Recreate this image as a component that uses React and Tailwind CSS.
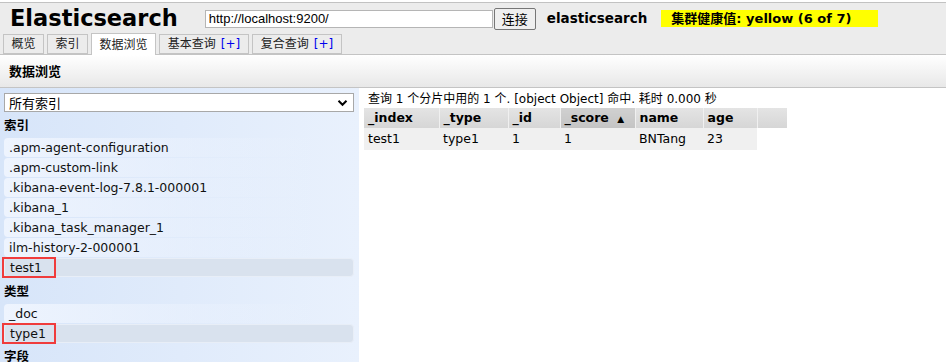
import React from "react";

const font = { fontFamily: '"DejaVu Sans", Verdana, "Noto Sans CJK SC", sans-serif' };

function Tab({ children, active, plus, w }) {
  return (
    <div
      className={
        "flex items-center justify-center border border-[#c4c4c4] text-[12px] text-[#222] " +
        (active
          ? "h-[22px] -mb-px border-b-0 bg-white z-10"
          : "h-[20px] bg-[#ececec]")
      }
      style={{ width: w }}
    >
      <span>{children}</span>
      {plus && <span className="ml-[5px] text-[#0000ee]">[+]</span>}
    </div>
  );
}

const indices = [
  ".apm-agent-configuration",
  ".apm-custom-link",
  ".kibana-event-log-7.8.1-000001",
  ".kibana_1",
  ".kibana_task_manager_1",
  "ilm-history-2-000001",
];

function Item({ children, selected }) {
  if (selected) {
    return (
      <div className="relative mt-px h-[19px] rounded-[4px] border border-[#e8eef7] bg-[#d9e2ee] pl-[5px] text-[12.5px] leading-[17px] text-[#111]">
        {children}
        <div className="absolute left-[-3px] top-[-2px] h-[21px] w-[54px] border-2 border-[#f03c3c]" />
      </div>
    );
  }
  return (
    <div className="mt-px h-[19px] rounded-[4px] bg-gradient-to-r from-[#eef4fe] to-transparent pl-[5px] text-[12.5px] leading-[19px] text-[#111] w-[316px]">
      {children}
    </div>
  );
}

export default function App() {
  return (
    <div className="w-[946px] h-[362px] overflow-hidden bg-white" style={font}>
      <div className="mt-[2px] border-t border-[#c2c2c2] bg-[#ececec]">
        <div className="flex h-[31px] items-center">
          <div className="ml-[10px] text-[22.5px] font-bold leading-none text-black">Elasticsearch</div>
          <input
            readOnly
            value="http://localhost:9200/"
            className="ml-[27px] h-[18px] w-[288px] border border-[#b5b5b5] bg-white px-[3px] text-[13px] text-black outline-none"
            style={{ fontFamily: '"Liberation Sans", Arial, sans-serif' }}
          />
          <button
            className="ml-px h-[22px] w-[42px] rounded-[2px] border border-[#767676] bg-[#efefef] text-[13px] text-black"
            style={{ fontFamily: '"Noto Sans CJK SC", sans-serif' }}
          >
            连接
          </button>
          <div className="ml-[11px] text-[13.5px] font-bold text-black">elasticsearch</div>
          <div className="ml-[14px] h-[17px] w-[217px] bg-[#ffff00] pl-[10px] text-[13px] font-bold leading-[17px] text-black">
            集群健康值: yellow (6 of 7)
          </div>
        </div>
        <div className="flex h-[20px] items-end gap-[3px] pl-[3px]">
          <Tab w={41}>概览</Tab>
          <Tab w={41}>索引</Tab>
          <Tab w={65} active>数据浏览</Tab>
          <Tab w={90} plus>基本查询</Tab>
          <Tab w={90} plus>复合查询</Tab>
        </div>
      </div>
      <div className="h-[34px] border-t border-b border-[#c4c4c4] bg-gradient-to-b from-white to-[#e8e8e8] pl-[9px] text-[13px] font-bold leading-[33px] text-black">
        数据浏览
      </div>
      <div className="flex h-[274px]">
        <div className="w-[359px] shrink-0 bg-gradient-to-r from-[#d7e5f9] to-[#e9f1fd] pl-[4px] pr-[5px] pt-[5px]">
          <div className="flex h-[19px] items-center justify-between border border-[#a8a8a8] bg-white pl-[4px] pr-[5px] text-[13px] text-black">
            <span style={{ fontFamily: '"Noto Sans CJK SC", sans-serif' }}>所有索引</span>
            <svg width="11" height="8" viewBox="0 0 11 8">
              <path d="M1.5 1.8 L5.5 5.8 L9.5 1.8" stroke="#000" strokeWidth="2" fill="none" />
            </svg>
          </div>
          <div className="mt-[4px] mb-[3px] h-[19px] text-[12.5px] font-bold leading-[19px] text-black">索引</div>
          {indices.map((i) => (
            <Item key={i}>{i}</Item>
          ))}
          <Item selected>test1</Item>
          <div className="mt-[6px] mb-[3px] h-[18px] text-[12.5px] font-bold leading-[18px] text-black">类型</div>
          <Item>_doc</Item>
          <Item selected>type1</Item>
          <div className="mt-[5px] h-[18px] text-[12.5px] font-bold leading-[18px] text-black">字段</div>
        </div>
        <div className="flex-1 pl-[5px] pt-[3px]">
          <div className="pl-[4px] text-[12px] leading-[16px] text-black">
            查询 1 个分片中用的 1 个. [object Object] 命中. 耗时 0.000 秒
          </div>
          <table className="mt-px border-collapse text-[12.5px] text-black">
            <thead>
              <tr className="h-[20px] bg-gradient-to-b from-[#e4e4e4] to-[#d6d6d6] text-left font-bold">
                <th className="w-[75px] border-r border-[#f0f0f0] pl-[4px] font-bold">_index</th>
                <th className="w-[69px] border-r border-[#f0f0f0] pl-[4px] font-bold">_type</th>
                <th className="w-[52px] border-r border-[#f0f0f0] pl-[4px] font-bold">_id</th>
                <th className="w-[75px] border-r border-[#f0f0f0] bg-gradient-to-b from-[#d0d0d0] to-[#c4c4c4] pl-[4px] font-bold">
                  _score <span className="ml-[4px] text-[9px]">▲</span>
                </th>
                <th className="w-[68px] border-r border-[#f0f0f0] pl-[4px] font-bold">name</th>
                <th className="w-[54px] border-r border-[#f0f0f0] pl-[4px] font-bold">age</th>
                <th className="w-[30px]"></th>
              </tr>
            </thead>
            <tbody>
              <tr className="h-[22px]">
                <td className="bg-[#f0f0f0] pl-[4px]">test1</td>
                <td className="bg-[#f0f0f0] pl-[4px]">type1</td>
                <td className="bg-[#f0f0f0] pl-[4px]">1</td>
                <td className="bg-[#f0f0f0] pl-[4px]">1</td>
                <td className="bg-[#f0f0f0] pl-[4px]">BNTang</td>
                <td className="bg-[#f0f0f0] pl-[4px]">23</td>
                <td></td>
              </tr>
            </tbody>
          </table>
        </div>
      </div>
    </div>
  );
}
